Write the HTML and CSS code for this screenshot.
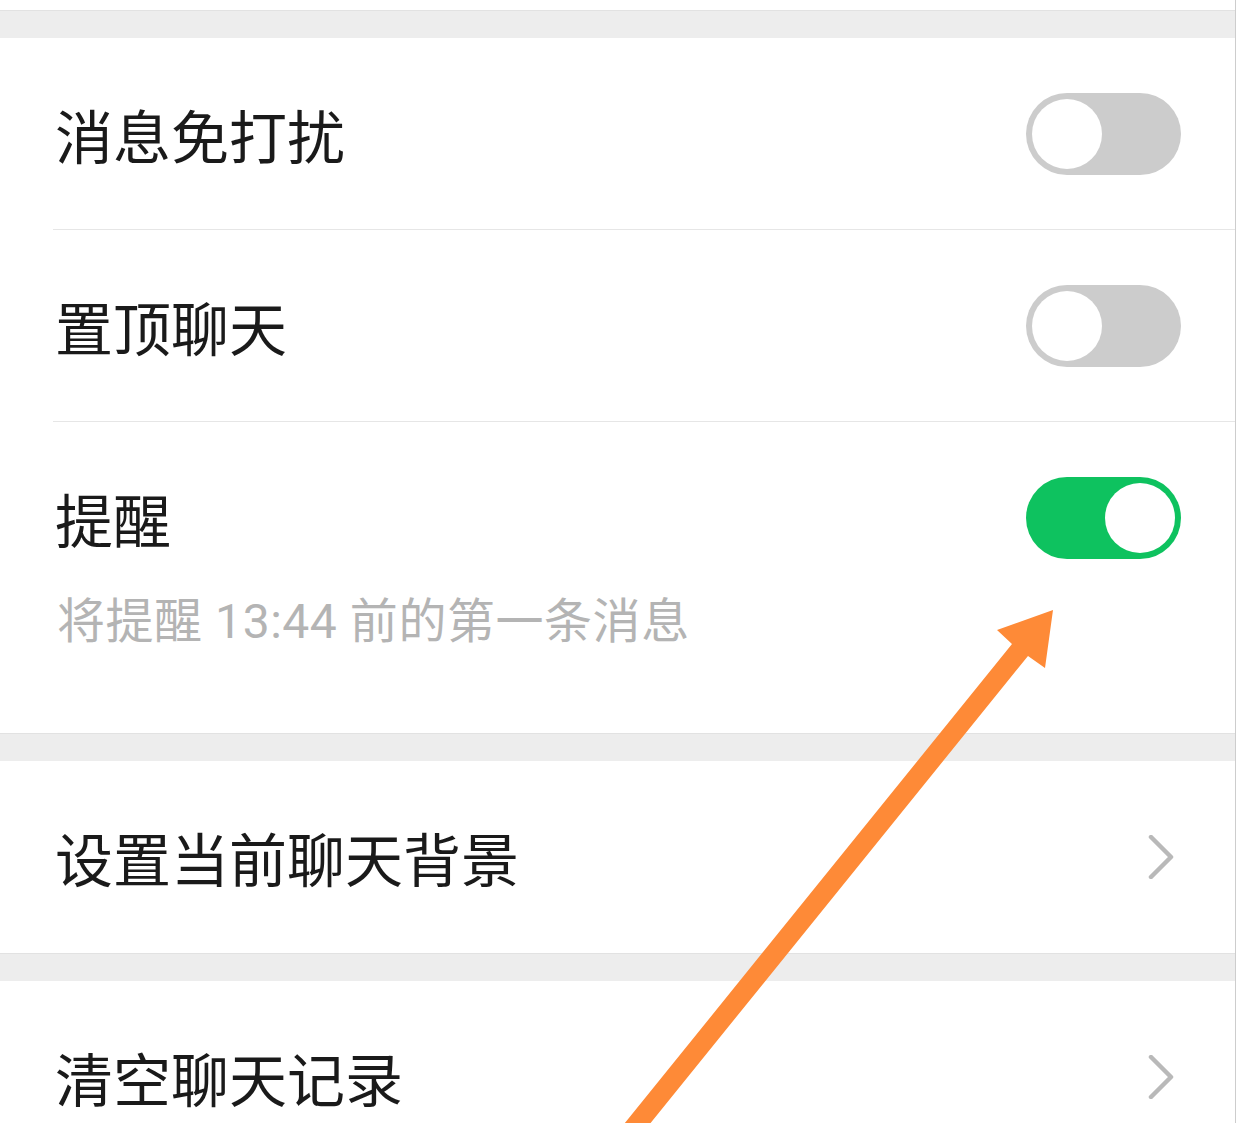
FILE: index.html
```html
<!DOCTYPE html>
<html lang="zh-CN">
<head>
<meta charset="utf-8">
<title>聊天设置</title>
<link rel="stylesheet" href="styles.css">
</head>
<body>
<div class="page">
  <div class="top-gap"></div>
  <div class="band"></div>
  <div class="group">
    <div class="row">
      <span class="label">消息免打扰</span>
      <span class="switch"><span class="knob"></span></span>
    </div>
    <div class="divider"></div>
    <div class="row">
      <span class="label">置顶聊天</span>
      <span class="switch"><span class="knob"></span></span>
    </div>
    <div class="divider"></div>
    <div class="row-tall">
      <div class="row-head">
        <span class="label">提醒</span>
        <span class="switch on"><span class="knob"></span></span>
      </div>
      <div class="sub">将提醒 13:44 前的第一条消息</div>
    </div>
  </div>
  <div class="band"></div>
  <div class="group">
    <div class="row row-full">
      <span class="label">设置当前聊天背景</span>
      <svg class="chev" viewBox="0 0 26 44" width="26" height="44"><path d="M3 2 L23 22 L3 42" fill="none" stroke="#b9b9b9" stroke-width="4.5" stroke-linecap="round" stroke-linejoin="round"/></svg>
    </div>
  </div>
  <div class="band"></div>
  <div class="group">
    <div class="row row-full">
      <span class="label">清空聊天记录</span>
      <svg class="chev" viewBox="0 0 26 44" width="26" height="44"><path d="M3 2 L23 22 L3 42" fill="none" stroke="#b9b9b9" stroke-width="4.5" stroke-linecap="round" stroke-linejoin="round"/></svg>
    </div>
  </div>
  <svg class="arrow" viewBox="0 0 1236 1123" width="1236" height="1123">
    <polygon points="1053,610 1045,668 1028,656 632,1146 616,1134 1012,644 997,630" fill="#fe8a37"/>
  </svg>
</div>
</body>
</html>
```

FILE: styles.css
```css
html, body {
  margin: 0;
  padding: 0;
  background: #ffffff;
}

body {
  width: 1236px;
  height: 1123px;
  overflow: hidden;
  font-family: "Noto Sans CJK SC", "Noto Sans", sans-serif;
}

.page {
  position: relative;
  width: 1235px;
  height: 1123px;
  border-right: 1px solid #cdcdcd;
  overflow: hidden;
  background: #ffffff;
}

.top-gap {
  height: 10px;
  background: #ffffff;
}

.band {
  height: 27px;
  background: #ededed;
  border-top: 1px solid #e2e2e2;
}

.group {
  background: #ffffff;
}

.row {
  height: 191px;
  display: flex;
  align-items: center;
  justify-content: space-between;
  padding: 0 54px 0 55px;
}

.row-full {
  height: 192px;
}

.divider {
  height: 1px;
  margin-left: 53px;
  background: #e6e6e6;
}

.row-tall {
  height: 311px;
  box-sizing: border-box;
  padding: 31px 54px 0 55px;
}

.row-head {
  height: 130px;
  display: flex;
  align-items: center;
  justify-content: space-between;
}

.label {
  font-size: 58px;
  line-height: 1.2;
  color: #1a1a1a;
  padding-top: 2px;
}

.sub {
  margin-top: 9px;
  padding-left: 2px;
  font-family: "Roboto", "Noto Sans CJK SC", sans-serif;
  font-size: 48px;
  font-weight: 400;
  letter-spacing: 0.55px;
  line-height: 60px;
  color: #b4b4b4;
}

.switch {
  width: 155px;
  height: 82px;
  box-sizing: border-box;
  border-radius: 41px;
  background: #cccccc;
  padding: 6px;
  display: flex;
  justify-content: flex-start;
}

.switch.on {
  background: #0ec25f;
  justify-content: flex-end;
}

.knob {
  width: 70px;
  height: 70px;
  border-radius: 50%;
  background: #ffffff;
}

.chev {
  display: block;
  margin-right: 7px;
}

.arrow {
  position: absolute;
  left: 0;
  top: 0;
  pointer-events: none;
}
```
